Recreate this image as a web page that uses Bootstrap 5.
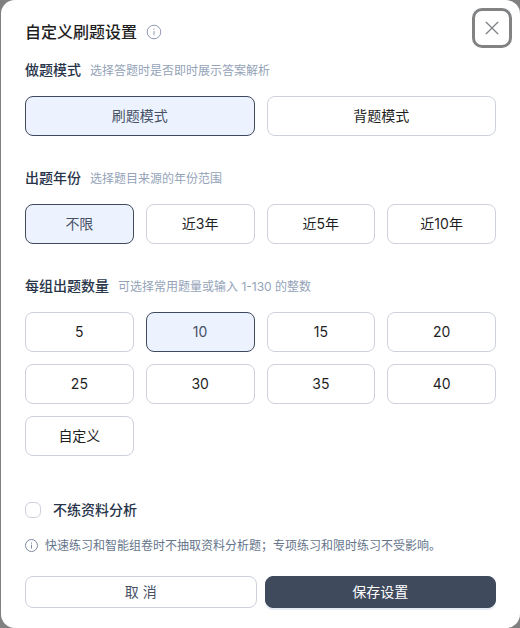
<!DOCTYPE html>
<html lang="zh-CN">
<head>
<meta charset="utf-8">
<meta name="viewport" content="width=device-width, initial-scale=1">
<title>自定义刷题设置</title>
<link href="https://cdn.jsdelivr.net/npm/bootstrap@5.3.0/dist/css/bootstrap.min.css" rel="stylesheet">
<style>
  body {
    background: #808080;
    font-family: Inter, "Noto Sans CJK SC", sans-serif;
    font-size: 14px;
    line-height: 20px;
    padding-left: 1px;
  }
  .settings-panel { background: #fff; border-radius: 14px; min-height: 100vh; }
  .panel-head { padding: 8px 8px 0 24px; }
  .title-line { gap: 9px; padding-top: 12px; }
  .panel-title { font-size: 16px; line-height: 24px; font-weight: 500; color: #1f1f1f; }
  .panel-main { padding: 12px 24px 20px; }
  .close-btn {
    width: 40px; height: 40px;
    border: 3px solid #808284; border-radius: 10px;
    background: #fff; color: #808284;
  }
  .section-gap { margin-bottom: 32px; }
  .section-name { font-size: 14px; line-height: 20px; font-weight: 500; color: #27344a; }
  .hint { font-size: 12px; color: #94a3b8; }
  .head-line { gap: 9px; height: 20px; margin-bottom: 16px; }
  .choices { --bs-gutter-x: 12px; --bs-gutter-y: 12px; }
  .choice {
    --bs-btn-color: #1f1f1f;
    --bs-btn-border-color: #cdd1dc;
    --bs-btn-hover-border-color: #3f4a5c;
    --bs-btn-active-color: #475166;
    --bs-btn-active-bg: #ecf3ff;
    --bs-btn-active-border-color: #3f4a5c;
    --bs-btn-border-radius: 8px;
    --bs-btn-font-size: 14px;
    --bs-btn-line-height: 20px;
    --bs-btn-padding-y: 9px;
  }
  .skip-row { margin-top: 44px; gap: 12px; }
  .form-check-input.skip-box { width: 16px; height: 16px; border-radius: 6px; border-color: #cdd1dc; }
  .note { margin: 16px 0 20px; gap: 6px; font-size: 12px; color: #64748b; }
  .foot-btn {
    --bs-btn-border-radius: 8px;
    --bs-btn-font-size: 14px;
    --bs-btn-line-height: 20px;
    --bs-btn-padding-y: 5px;
  }
  .cancel-btn { --bs-btn-color: #475166; --bs-btn-border-color: #cdd1dc; --bs-btn-hover-border-color: #3f4a5c; }
  .save-btn {
    --bs-btn-color: #fff; --bs-btn-bg: #3f4a5c; --bs-btn-border-color: #3f4a5c;
    --bs-btn-hover-color: #fff; --bs-btn-hover-bg: #505d72;
    box-shadow: 0 2px 0 #e6ebf3;
  }
</style>
</head>
<body>
<form class="settings-panel d-flex flex-column">
  <header class="panel-head d-flex justify-content-between align-items-start">
    <div class="title-line d-flex align-items-center">
      <h1 class="panel-title mb-0">自定义刷题设置</h1>
      <svg width="16" height="16" viewBox="0 0 16 16" fill="none" stroke="#8f9bb0" aria-hidden="true"><circle cx="8" cy="8" r="6.8"/><path d="M8 7v4.2M8 4.6v1.2"/></svg>
    </div>
    <button type="button" class="close-btn d-flex align-items-center justify-content-center p-0" aria-label="关闭">
      <svg width="14" height="14" viewBox="0 0 14 14" fill="none" stroke="currentColor" stroke-width="1.3" stroke-linecap="round"><path d="M1.2 1.2l11.6 11.6M12.8 1.2L1.2 12.8"/></svg>
    </button>
  </header>

  <main class="panel-main">
    <section class="section-gap">
      <div class="head-line d-flex align-items-baseline">
        <h2 class="section-name mb-0">做题模式</h2><span class="hint">选择答题时是否即时展示答案解析</span>
      </div>
      <div class="row row-cols-2 choices">
        <div class="col"><input class="btn-check" type="radio" name="mode" id="m1" checked><label class="btn choice w-100" for="m1">刷题模式</label></div>
        <div class="col"><input class="btn-check" type="radio" name="mode" id="m2"><label class="btn choice w-100" for="m2">背题模式</label></div>
      </div>
    </section>

    <section class="section-gap">
      <div class="head-line d-flex align-items-baseline">
        <h2 class="section-name mb-0">出题年份</h2><span class="hint">选择题目来源的年份范围</span>
      </div>
      <div class="row row-cols-4 choices">
        <div class="col"><input class="btn-check" type="radio" name="year" id="y0" checked><label class="btn choice w-100" for="y0">不限</label></div>
        <div class="col"><input class="btn-check" type="radio" name="year" id="y3"><label class="btn choice w-100" for="y3">近3年</label></div>
        <div class="col"><input class="btn-check" type="radio" name="year" id="y5"><label class="btn choice w-100" for="y5">近5年</label></div>
        <div class="col"><input class="btn-check" type="radio" name="year" id="y10"><label class="btn choice w-100" for="y10">近10年</label></div>
      </div>
    </section>

    <section>
      <div class="head-line d-flex align-items-baseline">
        <h2 class="section-name mb-0">每组出题数量</h2><span class="hint">可选择常用题量或输入 1-130 的整数</span>
      </div>
      <div class="row row-cols-4 choices">
        <div class="col"><input class="btn-check" type="radio" name="count" id="c5"><label class="btn choice w-100" for="c5">5</label></div>
        <div class="col"><input class="btn-check" type="radio" name="count" id="c10" checked><label class="btn choice w-100" for="c10">10</label></div>
        <div class="col"><input class="btn-check" type="radio" name="count" id="c15"><label class="btn choice w-100" for="c15">15</label></div>
        <div class="col"><input class="btn-check" type="radio" name="count" id="c20"><label class="btn choice w-100" for="c20">20</label></div>
        <div class="col"><input class="btn-check" type="radio" name="count" id="c25"><label class="btn choice w-100" for="c25">25</label></div>
        <div class="col"><input class="btn-check" type="radio" name="count" id="c30"><label class="btn choice w-100" for="c30">30</label></div>
        <div class="col"><input class="btn-check" type="radio" name="count" id="c35"><label class="btn choice w-100" for="c35">35</label></div>
        <div class="col"><input class="btn-check" type="radio" name="count" id="c40"><label class="btn choice w-100" for="c40">40</label></div>
        <div class="col"><input class="btn-check" type="radio" name="count" id="cx"><label class="btn choice w-100" for="cx">自定义</label></div>
      </div>
    </section>

    <div class="skip-row d-flex align-items-center">
      <input class="form-check-input skip-box m-0 shadow-none" type="checkbox" id="skip">
      <label class="section-name" for="skip">不练资料分析</label>
    </div>
    <p class="note d-flex align-items-center">
      <svg class="flex-shrink-0" width="14" height="14" viewBox="0 0 14 14" fill="none" stroke="#7c8aa0" aria-hidden="true"><circle cx="6.5" cy="6.5" r="6"/><path d="M6.5 5.7v3.8M6.5 3.5v1.1"/></svg>
      <span>快速练习和智能组卷时不抽取资料分析题；专项练习和限时练习不受影响。</span>
    </p>
    <footer class="d-flex gap-2">
      <button type="button" class="btn foot-btn cancel-btn flex-fill w-50">取 消</button>
      <button type="submit" class="btn foot-btn save-btn flex-fill w-50">保存设置</button>
    </footer>
  </main>
</form>
<script src="https://cdn.jsdelivr.net/npm/bootstrap@5.3.0/dist/js/bootstrap.bundle.min.js"></script>
</body>
</html>
